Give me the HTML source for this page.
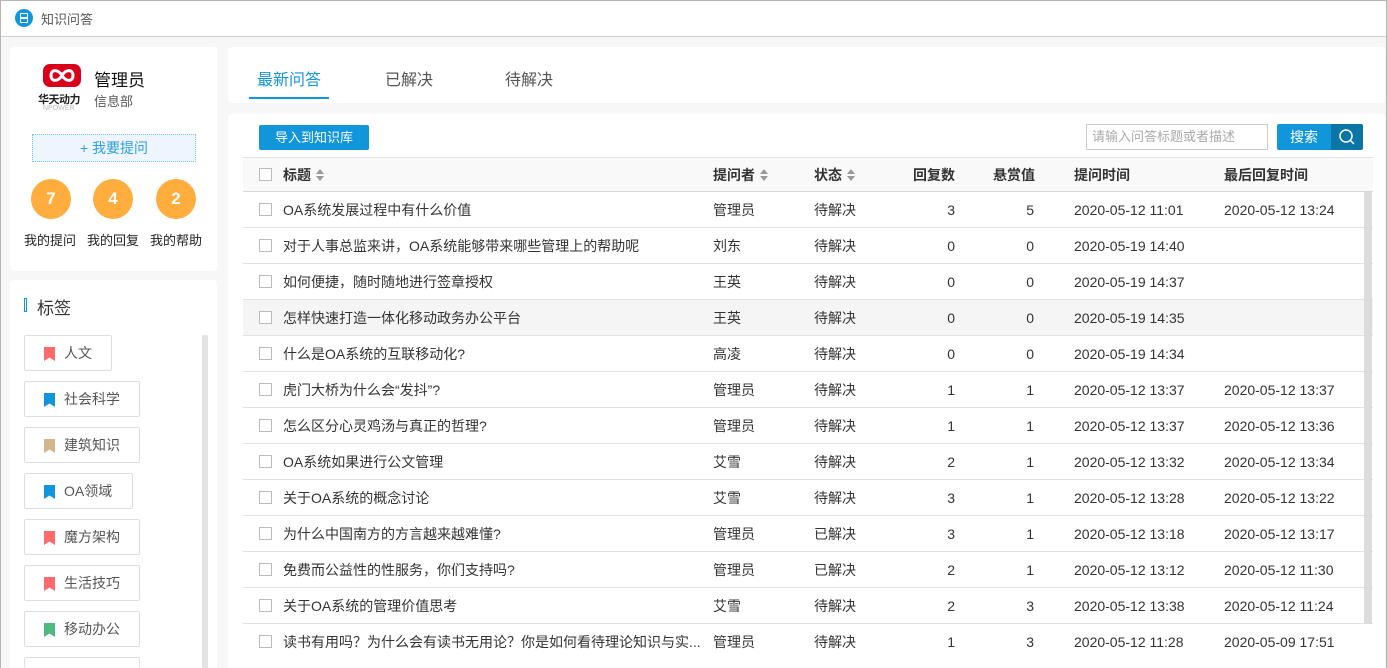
<!DOCTYPE html>
<html><head><meta charset="utf-8"><style>
*{margin:0;padding:0;box-sizing:border-box}
html{width:1387px;height:668px;overflow:hidden}
body{width:1387px;height:668px;overflow:hidden;background:#f7f7f7;font-family:"Liberation Sans","Noto Sans CJK SC",sans-serif;font-size:14px;color:#333;position:relative}
.a{position:absolute}
.frame{left:0;top:0;width:1387px;height:668px;border:1px solid #b5b5b5;border-bottom:none;z-index:5;pointer-events:none}
.hdr{left:1px;top:1px;width:1385px;height:36px;background:#fff;border-bottom:1px solid #d0d0d0}
.card{background:#fff;border-radius:4px;overflow:hidden}
.circ{width:40px;height:40px;border-radius:50%;background:#ffad3d;color:#fff;font-weight:bold;font-size:17px;text-align:center;line-height:40px}
.lbl{font-size:13px;color:#222}
.tag{left:24px;height:36px;border:1px solid #ddd;border-radius:2px;font-size:14px;color:#555;line-height:34px;padding-left:39px;background:#fff}
.tag i{position:absolute;left:19px;top:11px;width:11px;height:14px;clip-path:polygon(0 0,100% 0,100% 100%,50% 75%,0 100%)}
.row{left:243px;width:1130px;height:36px;border-bottom:1px solid #e2e2e2;font-size:14px;color:#333}
.row span{position:absolute;top:0;line-height:36px;white-space:nowrap}
.cb{position:absolute;left:16px;top:11px;width:13px;height:13px;border:1px solid #bbb;background:#fff}
.r{text-align:right}
.th span{font-weight:bold;color:#333}
.sort{display:inline-block;width:8px;height:12px;vertical-align:-1px;margin-left:5px;position:relative}
.sort:before{content:"";position:absolute;left:0;top:0;border:4px solid transparent;border-bottom:5px solid #999;border-top:none}
.sort:after{content:"";position:absolute;left:0;top:7px;border:4px solid transparent;border-top:5px solid #999;border-bottom:none}
</style></head><body>
<div class="a frame"></div>
<div class="a hdr">
 <div class="a" style="left:14px;top:8px;width:18px;height:18px;border-radius:50%;background:#1296db"><div class="a" style="left:5px;top:4px;width:8px;height:10px;border:1.5px solid #fff;border-radius:1px"></div><div class="a" style="left:6px;top:8px;width:6px;height:1.5px;background:#fff"></div></div>
 <div class="a" style="left:40px;top:8px;font-size:13px;color:#555">知识问答</div>
</div>
<!-- left profile -->
<div class="a card" style="left:10px;top:47px;width:207px;height:224px">
 <div class="a" style="left:33px;top:17px;width:38px;height:23px;border-radius:7px;background:#d9001b">
  <svg width="38" height="23"><path d="M19 11.5 C15 5,8 5,8 11.5 C8 18,15 18,19 11.5 C23 5,30 5,30 11.5 C30 18,23 18,19 11.5Z" fill="none" stroke="#fff" stroke-width="3"/></svg></div>
 <div class="a" style="left:28px;top:44px;font-size:11px;font-weight:bold;color:#222;letter-spacing:-0.5px">华天动力</div>
 <div class="a" style="left:33px;top:58px;font-size:7px;color:#bbb">NPOWER</div>
 <div class="a" style="left:84px;top:19px;font-size:17px;color:#111">管理员</div>
 <div class="a" style="left:84px;top:44px;font-size:13px;color:#555">信息部</div>
 <div class="a" style="left:22px;top:87px;width:164px;height:28px;background:#eef5fe;border:1px dotted #6fc8f0;color:#2ba0e0;text-align:center;line-height:26px;font-size:14px">+ 我要提问</div>
 <div class="a circ" style="left:21px;top:132px">7</div>
 <div class="a circ" style="left:83px;top:132px">4</div>
 <div class="a circ" style="left:146px;top:132px">2</div>
 <div class="a lbl" style="left:14px;top:183px">我的提问</div>
 <div class="a lbl" style="left:77px;top:183px">我的回复</div>
 <div class="a lbl" style="left:140px;top:183px">我的帮助</div>
</div>
<!-- tags -->
<div class="a card" style="left:10px;top:280px;width:207px;height:388px;border-radius:4px 4px 0 0">
 <div class="a" style="left:14px;top:18px;width:3px;height:14px;border:1px solid #1296db"></div>
 <div class="a" style="left:27px;top:14px;font-size:17px;color:#333">标签</div>
 <div class="a" style="left:192px;top:55px;width:6px;height:345px;background:#e3e3e3;border-radius:2px"></div>
</div>
<div class="a tag" style="top:335px;width:88px"><i style="background:#ff6b6b"></i>人文</div>
<div class="a tag" style="top:381px;width:116px"><i style="background:#1296db"></i>社会科学</div>
<div class="a tag" style="top:427px;width:116px"><i style="background:#d4b48a"></i>建筑知识</div>
<div class="a tag" style="top:473px;width:109px"><i style="background:#1296db"></i>OA领域</div>
<div class="a tag" style="top:519px;width:116px"><i style="background:#ff6b6b"></i>魔方架构</div>
<div class="a tag" style="top:565px;width:116px"><i style="background:#ff6b6b"></i>生活技巧</div>
<div class="a tag" style="top:611px;width:116px"><i style="background:#4fb981"></i>移动办公</div>
<div class="a tag" style="top:657px;width:116px;height:11px;border-bottom:none"></div>
<!-- tabs -->
<div class="a card" style="left:228px;top:47px;width:1157px;height:56px">
 <div class="a" style="left:29px;top:19px;font-size:16px;color:#1296db">最新问答</div>
 <div class="a" style="left:157px;top:19px;font-size:16px;color:#555">已解决</div>
 <div class="a" style="left:277px;top:19px;font-size:16px;color:#555">待解决</div>
 <div class="a" style="left:21px;top:50px;width:80px;height:2px;background:#1296db"></div>
</div>
<!-- table card -->
<div class="a card" style="left:228px;top:114px;width:1157px;height:554px;border-radius:4px 4px 0 0">
 <div class="a" style="left:31px;top:11px;width:110px;height:25px;background:#1296db;border-radius:2px;color:#fff;text-align:center;line-height:25px;font-size:13px">导入到知识库</div>
 <div class="a" style="left:858px;top:10px;width:182px;height:26px;border:1px solid #ccc;font-size:13px;color:#aaa;line-height:24px;padding-left:5px">请输入问答标题或者描述</div>
 <div class="a" style="left:1049px;top:10px;width:54px;height:26px;background:#1296db;border-radius:2px 0 0 2px;color:#fff;font-size:14px;text-align:center;line-height:26px">搜索</div>
 <div class="a" style="left:1103px;top:10px;width:32px;height:26px;background:#0b75a8;border-radius:0 2px 2px 0">
  <svg width="32" height="26"><circle cx="15" cy="12" r="6" fill="none" stroke="#fff" stroke-width="1.5"/><line x1="19.5" y1="16.5" x2="23" y2="20" stroke="#fff" stroke-width="1.5"/></svg></div>
</div>
<div class="a row th" style="top:157px;height:35px;background:#f9f9f9;border-top:1px solid #e2e2e2;border-bottom:1px solid #d8d8d8">
 <div class="cb" style="top:10px"></div>
 <span style="left:40px;line-height:34px">标题<i class="sort"></i></span>
 <span style="left:470px;line-height:34px">提问者<i class="sort"></i></span>
 <span style="left:571px;line-height:34px">状态<i class="sort"></i></span>
 <span style="left:670px;line-height:34px">回复数</span>
 <span style="left:750px;line-height:34px">悬赏值</span>
 <span style="left:831px;line-height:34px">提问时间</span>
 <span style="left:981px;line-height:34px">最后回复时间</span>
</div>
<div id="rows"></div>
<div class="a" style="left:1364px;top:192px;width:8px;height:432px;background:#dcdcdc"></div>
<script>
var d=[["OA系统发展过程中有什么价值","管理员","待解决",3,5,"2020-05-12 11:01","2020-05-12 13:24"],
["对于人事总监来讲，OA系统能够带来哪些管理上的帮助呢","刘东","待解决",0,0,"2020-05-19 14:40",""],
["如何便捷，随时随地进行签章授权","王英","待解决",0,0,"2020-05-19 14:37",""],
["怎样快速打造一体化移动政务办公平台","王英","待解决",0,0,"2020-05-19 14:35",""],
["什么是OA系统的互联移动化?","高凌","待解决",0,0,"2020-05-19 14:34",""],
["虎门大桥为什么会“发抖”?","管理员","待解决",1,1,"2020-05-12 13:37","2020-05-12 13:37"],
["怎么区分心灵鸡汤与真正的哲理?","管理员","待解决",1,1,"2020-05-12 13:37","2020-05-12 13:36"],
["OA系统如果进行公文管理","艾雪","待解决",2,1,"2020-05-12 13:32","2020-05-12 13:34"],
["关于OA系统的概念讨论","艾雪","待解决",3,1,"2020-05-12 13:28","2020-05-12 13:22"],
["为什么中国南方的方言越来越难懂?","管理员","已解决",3,1,"2020-05-12 13:18","2020-05-12 13:17"],
["免费而公益性的性服务，你们支持吗?","管理员","已解决",2,1,"2020-05-12 13:12","2020-05-12 11:30"],
["关于OA系统的管理价值思考","艾雪","待解决",2,3,"2020-05-12 13:38","2020-05-12 11:24"],
["读书有用吗？为什么会有读书无用论？你是如何看待理论知识与实...","管理员","待解决",1,3,"2020-05-12 11:28","2020-05-09 17:51"]];
var h="";d.forEach(function(r,i){var t=192+i*36;var hh=(i==12)?'height:32px;border-bottom:none;':'';
h+='<div class="a row" style="top:'+t+'px;'+hh+(i==3?'background:#f5f5f5':'background:#fff')+'"><div class="cb"></div><span style="left:40px">'+r[0]+'</span><span style="left:470px">'+r[1]+'</span><span style="left:571px">'+r[2]+'</span><span class="r" style="left:680px;width:32px">'+r[3]+'</span><span class="r" style="left:760px;width:31px">'+r[4]+'</span><span style="left:831px">'+r[5]+'</span><span style="left:981px">'+r[6]+'</span></div>';});
document.getElementById("rows").innerHTML=h;
</script>
</body></html>
